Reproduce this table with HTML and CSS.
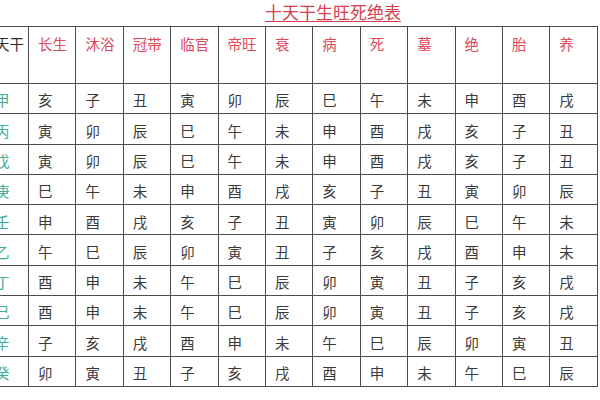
FILE: index.html
```html
<!DOCTYPE html>
<html lang="zh">
<head>
<meta charset="utf-8">
<link rel="stylesheet" href="styles.css">
</head>
<body>
<div class="page">
  <div class="title-row"><h1 class="title">十天干生旺死绝表</h1></div>
  <div class="clip">
    <div class="grid">
      <div class="cell head stem-head">天干</div>
      <div class="cell head">长生</div><div class="cell head">沐浴</div><div class="cell head">冠带</div><div class="cell head">临官</div><div class="cell head">帝旺</div><div class="cell head">衰</div><div class="cell head">病</div><div class="cell head">死</div><div class="cell head">墓</div><div class="cell head">绝</div><div class="cell head">胎</div><div class="cell head">养</div>

      <div class="cell stem">甲</div><div class="cell">亥</div><div class="cell">子</div><div class="cell">丑</div><div class="cell">寅</div><div class="cell">卯</div><div class="cell">辰</div><div class="cell">巳</div><div class="cell">午</div><div class="cell">未</div><div class="cell">申</div><div class="cell">酉</div><div class="cell">戌</div>
      <div class="cell stem">丙</div><div class="cell">寅</div><div class="cell">卯</div><div class="cell">辰</div><div class="cell">巳</div><div class="cell">午</div><div class="cell">未</div><div class="cell">申</div><div class="cell">酉</div><div class="cell">戌</div><div class="cell">亥</div><div class="cell">子</div><div class="cell">丑</div>
      <div class="cell stem">戊</div><div class="cell">寅</div><div class="cell">卯</div><div class="cell">辰</div><div class="cell">巳</div><div class="cell">午</div><div class="cell">未</div><div class="cell">申</div><div class="cell">酉</div><div class="cell">戌</div><div class="cell">亥</div><div class="cell">子</div><div class="cell">丑</div>
      <div class="cell stem">庚</div><div class="cell">巳</div><div class="cell">午</div><div class="cell">未</div><div class="cell">申</div><div class="cell">酉</div><div class="cell">戌</div><div class="cell">亥</div><div class="cell">子</div><div class="cell">丑</div><div class="cell">寅</div><div class="cell">卯</div><div class="cell">辰</div>
      <div class="cell stem">壬</div><div class="cell">申</div><div class="cell">酉</div><div class="cell">戌</div><div class="cell">亥</div><div class="cell">子</div><div class="cell">丑</div><div class="cell">寅</div><div class="cell">卯</div><div class="cell">辰</div><div class="cell">巳</div><div class="cell">午</div><div class="cell">未</div>
      <div class="cell stem">乙</div><div class="cell">午</div><div class="cell">巳</div><div class="cell">辰</div><div class="cell">卯</div><div class="cell">寅</div><div class="cell">丑</div><div class="cell">子</div><div class="cell">亥</div><div class="cell">戌</div><div class="cell">酉</div><div class="cell">申</div><div class="cell">未</div>
      <div class="cell stem">丁</div><div class="cell">酉</div><div class="cell">申</div><div class="cell">未</div><div class="cell">午</div><div class="cell">巳</div><div class="cell">辰</div><div class="cell">卯</div><div class="cell">寅</div><div class="cell">丑</div><div class="cell">子</div><div class="cell">亥</div><div class="cell">戌</div>
      <div class="cell stem">己</div><div class="cell">酉</div><div class="cell">申</div><div class="cell">未</div><div class="cell">午</div><div class="cell">巳</div><div class="cell">辰</div><div class="cell">卯</div><div class="cell">寅</div><div class="cell">丑</div><div class="cell">子</div><div class="cell">亥</div><div class="cell">戌</div>
      <div class="cell stem">辛</div><div class="cell">子</div><div class="cell">亥</div><div class="cell">戌</div><div class="cell">酉</div><div class="cell">申</div><div class="cell">未</div><div class="cell">午</div><div class="cell">巳</div><div class="cell">辰</div><div class="cell">卯</div><div class="cell">寅</div><div class="cell">丑</div>
      <div class="cell stem">癸</div><div class="cell">卯</div><div class="cell">寅</div><div class="cell">丑</div><div class="cell">子</div><div class="cell">亥</div><div class="cell">戌</div><div class="cell">酉</div><div class="cell">申</div><div class="cell">未</div><div class="cell">午</div><div class="cell">巳</div><div class="cell">辰</div>
    </div>
  </div>
</div>
</body>
</html>
```

FILE: styles.css
```css
html, body {
  margin: 0;
  padding: 0;
  background: #ffffff;
}
body {
  width: 600px;
  height: 400px;
  overflow: hidden;
  font-family: "Noto Sans CJK SC", "Noto Sans", sans-serif;
}
.page {
  width: 600px;
  height: 400px;
  overflow: hidden;
}
.title-row {
  height: 26px;
  display: flex;
  justify-content: flex-start;
  padding-left: 265px;
}
.title {
  margin: 0;
  padding-top: 3px;
  font-size: 17px;
  font-weight: normal;
  line-height: 17px;
  color: #d4404e;
  text-decoration: underline;
  text-decoration-thickness: 1px;
  text-underline-offset: 2px;
  letter-spacing: 0;
  white-space: nowrap;
}
.clip {
  width: 600px;
  overflow: hidden;
}
.grid {
  margin-left: -15px;
  width: max-content;
  display: grid;
  grid-template-columns: 42px repeat(12, 46.4px);
  grid-template-rows: 56px repeat(10, 29.3px);
  gap: 1px;
  padding: 1px;
  background: #4d4d4d;
}
.cell {
  background: #ffffff;
  display: flex;
  align-items: center;
  padding: 4px 0 0 9px;
  font-size: 14.5px;
  color: #3a3a3a;
  line-height: 1;
}
.head {
  align-items: flex-start;
  padding-top: 10px;
  color: #dc4a5c;
  font-size: 14.5px;
}
.stem-head {
  color: #2e2e2e;
}
.stem {
  color: #45ad95;
}
```
